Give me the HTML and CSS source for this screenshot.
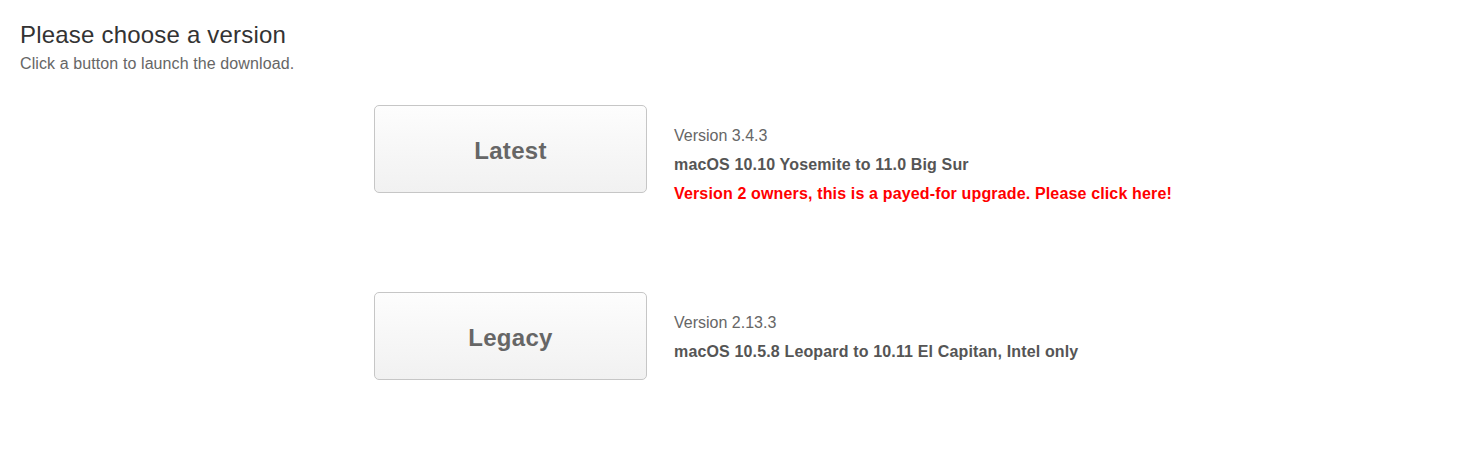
FILE: index.html
```html
<!DOCTYPE html>
<html>
<head>
<meta charset="utf-8">
<link rel="stylesheet" href="styles.css">
</head>
<body>
<div class="page">
  <h1 class="title">Please choose a version</h1>
  <p class="subtitle">Click a button to launch the download.</p>
  <div class="versions">
    <div class="row">
      <a class="btn" href="#">Latest</a>
      <div class="info">
        <div class="ver">Version 3.4.3</div>
        <div class="req">macOS 10.10 Yosemite to 11.0 Big Sur</div>
        <div class="note">Version 2 owners, this is a payed-for upgrade. Please click here!</div>
      </div>
    </div>
    <div class="row">
      <a class="btn" href="#">Legacy</a>
      <div class="info">
        <div class="ver">Version 2.13.3</div>
        <div class="req">macOS 10.5.8 Leopard to 10.11 El Capitan, Intel only</div>
      </div>
    </div>
  </div>
</div>
</body>
</html>
```

FILE: styles.css
```css
html, body {
  margin: 0;
  padding: 0;
  background: #fff;
}
body {
  font-family: "Liberation Sans", Arial, sans-serif;
  color: #666;
}
.page {
  padding: 22px 20px 0 20px;
}
.title {
  margin: 0;
  font-size: 24px;
  font-weight: normal;
  line-height: 26px;
  color: #333;
  letter-spacing: 0.2px;
}
.subtitle {
  margin: 6px 0 0 0;
  font-size: 16px;
  line-height: 20px;
  color: #666;
  letter-spacing: 0.1px;
}
.versions {
  margin-top: 31px;
  padding-left: 354px;
  display: flex;
  flex-direction: column;
}
.row {
  display: flex;
  align-items: flex-start;
  min-height: 187px;
}
.btn {
  box-sizing: border-box;
  width: 273px;
  height: 88px;
  padding-top: 3px;
  border: 1px solid #c6c6c6;
  border-radius: 5px;
  background: linear-gradient(#fdfdfd, #f1f1f1);
  display: flex;
  align-items: center;
  justify-content: center;
  font-size: 24px;
  font-weight: bold;
  color: #666;
  text-decoration: none;
  letter-spacing: 0.3px;
}
.info {
  margin-left: 27px;
  padding-top: 16px;
  font-size: 16px;
  line-height: 29px;
}
.ver {
  color: #666;
}
.req {
  font-weight: bold;
  color: #555;
  letter-spacing: 0.15px;
}
.note {
  font-weight: bold;
  color: #f00;
  letter-spacing: 0.15px;
}
```
